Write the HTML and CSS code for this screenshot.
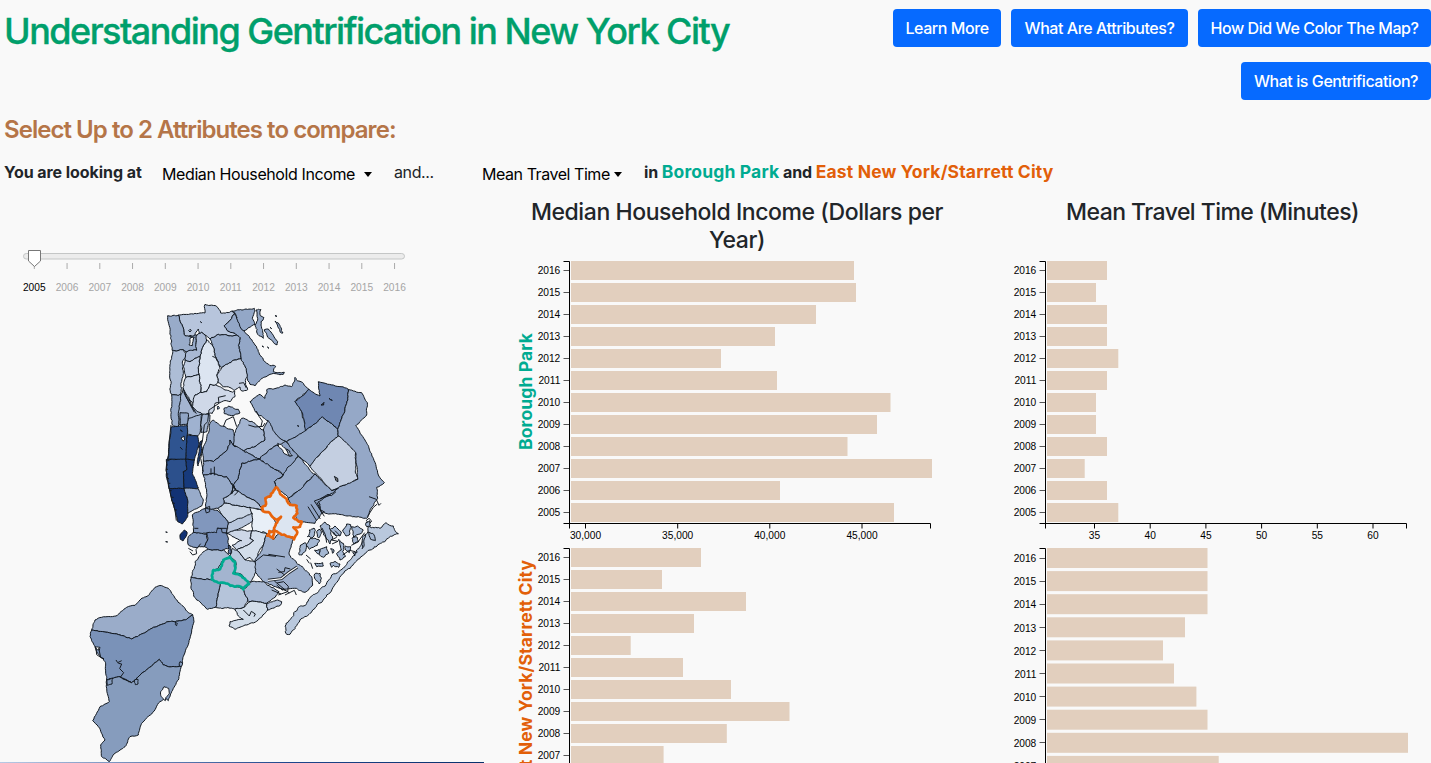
FILE: index.html
```html
<!DOCTYPE html>
<html lang="en">
<head>
<meta charset="utf-8">
<title>Understanding Gentrification in New York City</title>
<link rel="stylesheet" href="styles.css">
</head>
<body>
<header class="top">
  <h1 class="title">Understanding Gentrification in New York City</h1>
  <nav class="actions">
    <button class="btn b1">Learn More</button>
    <button class="btn b2">What Are Attributes?</button>
    <button class="btn b3">How Did We Color The Map?</button>
    <button class="btn b4">What is Gentrification?</button>
  </nav>
</header>
<h2 class="subtitle">Select Up to 2 Attributes to compare:</h2>
<div class="picker">
  <strong class="looking">You are looking at</strong>
  <span class="drop first">Median Household Income<i class="caret"></i></span>
  <span class="and">and...</span>
  <span class="drop second">Mean Travel Time<i class="caret"></i></span>
  <strong class="places">in <span class="teal">Borough Park</span> and <span class="orange">East New York/Starrett City</span></strong>
</div>
<main class="main">
  <section class="mapcol">
    <svg class="slider" id="slider" viewBox="0 198 484 97"></svg>
    <svg class="map" viewBox="0 295 484 467"><g id="map" transform="translate(155 295) scale(.33333)"></g></svg>
    <div class="legend"></div>
  </section>
  <section class="chart income">
    <h3 class="chart-title">Median Household Income (Dollars per<br>Year)</h3>
    <svg id="income" viewBox="510 258 440 505"></svg>
  </section>
  <section class="chart travel">
    <h3 class="chart-title">Mean Travel Time (Minutes)</h3>
    <svg id="travel" viewBox="986 258 445 505"></svg>
  </section>
</main>
<script src="app.js"></script>
</body>
</html>
```
FILE: styles.css
```css
* { box-sizing: border-box; }
html, body { margin: 0; height: 763px; overflow: hidden; }
body { background: #f9f9f9; color: #212529; font-family: Inter, "Liberation Sans", sans-serif; font-size: 16px; }
.top { display: flex; justify-content: space-between; height: 108px; padding: 9px 0 0 4px; }
.title { margin: 0; font-size: 36px; font-weight: 500; line-height: 44px; letter-spacing: -1.51px; color: #009f6b; white-space: nowrap; -webkit-text-stroke: .35px #009f6b; }
.actions { display: flex; flex-wrap: wrap; justify-content: flex-end; align-content: flex-start; gap: 15px 10px; width: 560px; }
.btn { height: 38px; padding: 0; border: 0; border-radius: 4px; background: #066aff; color: #fff; font: 500 16px Inter, sans-serif; letter-spacing: -.43px; white-space: nowrap; }
.b1 { width: 108px; } .b2 { width: 177px; } .b3 { width: 233px; } .b4 { width: 190px; }
.subtitle { margin: 0; padding-left: 4px; height: 44px; line-height: 44px; font-size: 24px; font-weight: 560; letter-spacing: -.95px; color: #b57548; }
.picker { display: flex; height: 46px; padding-left: 4px; line-height: 41px; white-space: nowrap; letter-spacing: -.4px; }
.looking { width: 158px; letter-spacing: -.06px; }
.drop { color: #000; line-height: 45px; }
.first { width: 232px; }
.second { width: 162px; letter-spacing: -.45px; }
.and { width: 88px; }
.caret { display: inline-block; margin-left: 9px; vertical-align: 3px; border: 4.5px solid transparent; border-top: 5px solid #000; border-bottom: 0; }
.second .caret { margin-left: 4px; }
.places { font-size: 16px; line-height: 39px; letter-spacing: -.1px; }
.teal, .orange { font-size: 17.5px; letter-spacing: .16px; }
.teal { color: #00ab91; }
.orange { color: #e25f09; }
.main { display: grid; grid-template-columns: 484px 466px 481px; height: 565px; }
.mapcol { display: flex; flex-direction: column; }
svg { display: block; overflow: hidden; }
.slider { width: 484px; height: 97px; }
.map { width: 484px; height: 467px; }
.legend { height: 1px; background: linear-gradient(90deg, #b8c9e4, #1e468c 60%, #08306b); }
.income { padding-left: 26px; }
.travel { padding-left: 36px; }
.income svg { width: 440px; height: 505px; }
.travel svg { width: 445px; height: 505px; }
.chart-title { margin: 0; height: 60px; font-size: 23px; font-weight: 530; line-height: 28px; letter-spacing: -.42px; text-align: center; }
.income .chart-title { padding-left: 14px; }
.travel .chart-title { padding-left: 8px; letter-spacing: -.55px; }
.tick { font: 10.2px "Liberation Sans", sans-serif; fill: #000; }
.year { font: 10.2px "Liberation Sans", sans-serif; fill: #a5a5a5; text-anchor: middle; }
.year.on { fill: #000; }
.bar { fill: #e2cfbe; }
.axis { fill: none; stroke: #000; }
.area { font: 700 17.5px Inter, sans-serif; text-anchor: middle; }
.land { stroke: #111820; stroke-width: 3; stroke-linejoin: round; }
.water { fill: #f9f9f9; stroke: #111820; stroke-width: 3; }
.detail { fill: none; stroke: #151b22; stroke-width: 3; }
.channel { fill: none; stroke: #151b22; stroke-width: 9; }
.channel.inner { stroke: #f9f9f9; stroke-width: 4; }
.pick { stroke-width: 8; stroke-linejoin: round; }
```
FILE: app.js
```js
const NS = 'http://www.w3.org/2000/svg';
function add(parent, tag, attrs, text) {
  const e = document.createElementNS(NS, tag);
  for (const k in attrs) e.setAttribute(k, attrs[k]);
  if (text) e.textContent = text;
  parent.appendChild(e);
  return e;
}

// Year slider
const slider = document.getElementById('slider');
add(slider, 'rect', { x: 23.5, y: 253.5, width: 381, height: 5.5, rx: 2.8, fill: '#ececec', stroke: '#c4c6c6' });
for (let i = 0; i < 12; i++) {
  const x = 34.3 + i * 32.75;
  add(slider, 'path', { d: `M${x} 263v6`, stroke: '#aaa' });
  add(slider, 'text', { x: x, y: 291, class: i ? 'year' : 'year on' }, String(2005 + i));
}
add(slider, 'path', { d: 'M28.5 250.5h12v10.5l-6 5.5l-6-5.5z', fill: '#fff', stroke: '#777' });

// Horizontal bar charts
function bars(svg, axisX, top, step, height, ends, drop) {
  ends.forEach((end, i) => {
    const y = top + i * step, mid = y + height / 2;
    add(svg, 'rect', { class: 'bar', x: axisX + 1.5, y: y, width: end - axisX - 1.5, height: height });
    add(svg, 'path', { class: 'axis', d: `M${axisX - 6} ${Math.floor(mid) + .5}h6`, 'stroke-opacity': .65 });
    add(svg, 'text', { class: 'tick', x: axisX - 9.2, y: mid + drop, 'text-anchor': 'end' }, String(2016 - i));
  });
}
function xAxis(svg, x0, x1, y, ticks) {
  add(svg, 'path', { class: 'axis', d: `M${x0 - 6} ${y}H${x1}v5M${x0} ${y}v5` });
  ticks.forEach(([x, label]) => {
    add(svg, 'path', { class: 'axis', d: `M${x} ${y}v5` });
    add(svg, 'text', { class: 'tick', x: x, y: 539, 'text-anchor': 'middle' }, label);
  });
}
function yAxis(svg, x, y0, y1) {
  add(svg, 'path', { class: 'axis', d: `M${x - 6} ${y0}h6V${y1}` });
}
const income = document.getElementById('income');
bars(income, 569.5, 261, 22, 19, [854, 856, 816, 775, 721, 777, 890.5, 877, 847.5, 932, 780, 894], 3.5);
bars(income, 569.5, 548, 22, 19, [701, 662, 746, 694, 630.7, 683, 731, 789.5, 726.8, 663.6], 3.5);
yAxis(income, 569.5, 261.5, 528);
yAxis(income, 569.5, 548.5, 770);
xAxis(income, 569.5, 930.5, 523.5, [[585.5, '30,000'], [677.7, '35,000'], [769.8, '40,000'], [862, '45,000']]);
add(income, 'text', { class: 'area', fill: '#00ab91', transform: 'translate(532 391.5) rotate(-90)', textLength: 117 }, 'Borough Park');
add(income, 'text', { class: 'area', fill: '#e25f09', transform: 'translate(532 678.5) rotate(-90)', textLength: 237 }, 'East New York/Starrett City');

const travel = document.getElementById('travel');
bars(travel, 1045.5, 261, 22, 19, [1107, 1096, 1107, 1107, 1118.3, 1107, 1096, 1096, 1107, 1084.7, 1107, 1118.3], 3.5);
bars(travel, 1045.5, 548, 23.1, 20, [1207.5, 1207.5, 1207.5, 1185, 1163, 1174, 1196.4, 1207.5, 1408, 1218.7], 4.2);
yAxis(travel, 1045.5, 261.5, 528);
yAxis(travel, 1045.5, 548.5, 770);
xAxis(travel, 1045.5, 1406.5, 523.5, [35, 40, 45, 50, 55, 60].map((v, i) => [1094.5 + 55.7 * i, String(v)]));

// District map. Shared edges get the same wiggle because it depends only on the two end points.
function edge(a, b, amp, out) {
  const len = Math.hypot(b[0] - a[0], b[1] - a[1]);
  if (len < 7) { out.push(b); return; }
  const flip = a[0] > b[0] || (a[0] === b[0] && a[1] > b[1]);
  const p = flip ? b : a, q = flip ? a : b;
  const s = Math.sin(p[0] * 12.9898 + p[1] * 78.233 + q[0] * 37.719 + q[1] * 4.581) * 43758.5453;
  const off = (s - Math.floor(s) - .5) * amp * Math.min(len, 16);
  const m = [(p[0] + q[0]) / 2 - (q[1] - p[1]) / len * off, (p[1] + q[1]) / 2 + (q[0] - p[0]) / len * off];
  edge(a, m, amp, out);
  edge(m, b, amp, out);
}
function shape(parent, fill, points, dx, dy, amp, cls) {
  const n = points.trim().split(/[ ,]+/).map(Number), pts = [];
  for (let i = 0; i < n.length; i += 2) pts.push([n[i] + dx, n[i + 1] + dy]);
  const out = [pts[0]];
  pts.forEach((p, i) => edge(p, pts[(i + 1) % pts.length], amp, out));
  const attrs = { class: cls || 'land', d: 'M' + out.map(p => p[0].toFixed(1) + ' ' + p[1].toFixed(1)).join('L') + 'Z' };
  if (fill) attrs.fill = fill;
  return add(parent, 'path', attrs);
}
const map = document.getElementById('map');
const draw = (dx, dy, amp, list) => list.forEach(([fill, pts, cls]) => shape(map, fill, pts, dx, dy, amp, cls));
const lines = (dx, dy, list) => list.forEach(d => add(map, 'path', { class: 'detail', d: d, transform: `translate(${dx} ${dy})` }));

// Bronx and upper Manhattan
draw(0, 0, .3, [
  ['#b7c5dc', '70,60 150,54 150,28 165,31 185,34 197,54 232,48 240,56 208,92 215,105 248,122 190,118 165,132 150,120 140,112 132,118 130,102 120,122 90,122 78,85'],
  ['#98abc9', '38,62 70,60 78,85 90,122 105,124 125,120 126,165 110,168 95,170 85,164 52,166 45,110'],
  ['#93a7c7', '232,48 298,40 300,48 292,70 300,88 280,98 262,110 250,90 243,60'],
  ['#95a9c8', '303,45 318,44 316,62 327,68 318,80 320,100 325,130 308,118 300,90 308,70'],
  ['#95a9c8', '328,104 340,102 368,140 366,150 345,132'],
  ['#95a9c8', '360,78 370,84 384,114 376,112'],
  ['#93a7c7', '240,56 208,92 215,105 248,122 255,128 252,160 258,190 270,215 275,245 285,268 300,272 320,250 345,238 385,238 388,232 355,230 362,214 345,212 325,196 310,170 300,150 285,130 270,112 255,95'],
  ['#9aadcb', '165,132 190,118 248,122 255,128 252,160 258,190 240,195 215,208 200,218 190,205 178,165'],
  ['#c4cfe1', '185,240 200,218 215,208 240,195 258,190 270,215 277,240 272,262 278,284 260,288 255,276 240,286 225,278 205,275 188,262'],
  ['#dce5f1', '132,238 135,185 140,165 155,135 165,145 178,165 190,205 195,220 185,240 188,262 182,270 165,268 155,290 137,292'],
  ['#a9b9d4', '126,120 140,112 150,120 155,135 140,165 135,185 120,190 105,200 90,195 95,170 125,166'],
  ['#bfcce1', '90,195 105,200 120,190 135,185 132,238 92,248 85,215'],
  ['#c9d4e5', '92,248 132,238 137,292 120,300 115,330 95,300 84,278'],
  ['#cfd8e8', '120,300 137,292 155,290 165,268 182,270 210,285 240,290 240,305 225,320 205,318 180,325 172,355 150,360 125,355 112,335'],
  ['#adbdd6', '52,166 85,164 92,175 82,205 84,240 80,280 78,298 50,298 46,255 44,230'],
  ['#95a9c8', '50,298 78,298 75,345 70,395 52,390 48,340'],
  ['#a4b5d1', '78,298 84,283 100,310 122,345 142,358 138,380 100,370 97,387 75,390 72,345'],
  [null, '106,128 118,126 112,152 102,150', 'water'],
  ['#93a7c7', '207,340 222,333 250,343 255,354 230,362 208,356'],
  ['#a4b5d1', '142,358 165,360 160,385 156,410 138,412'],
  ['#b7c5dc', '105,103 109,106 105,111 101,107'], ['#223', '136,80 140,83'], ['#223', '321,153 326,156'], ['#223', '337,156 342,160'], ['#223', '345,97 350,101'], ['#223', '360,62 366,64'],
  ['#95a9c8', '189,333 194,339 188,343']
]);
// Midtown and lower Manhattan
draw(0, 345, .14, [
  ['#9fb2d0', '100,25 140,13 135,70 128,78 97,72 97,42'],
  ['#90a5c5', '75,45 75,8 100,10 97,42'],
  ['#2f5490', '50,50 97,47 97,72 92,148 38,148 42,100'],
  ['#1f4283', '97,75 128,78 132,100 125,130 118,150 92,148'],
  ['#2c508c', '34,148 92,148 95,180 85,185 88,235 42,236 34,200'],
  ['#173a7c', '92,148 118,150 112,190 130,234 118,238 88,235 85,185 95,180'],
  ['#123274', '42,236 88,235 98,270 98,320 82,342 68,335 60,300 50,270'],
  ['#98abca', '88,235 130,236 145,270 140,288 98,310 98,270'],
  ['#1f4283', '135,95 141,92 138,130 129,168 127,160'],
  [null, '78,84 87,78 89,90 84,93', 'water'], ['#223', '76,112 82,118'], ['#223', '76,60 82,64']
]);
lines(0, 345, ['M48 45l-5 45l-2 50l-5 10l-3 30l4 20l5 32l8 38l10 30l4 32', 'M37 152h6M33 165h6M33 178h6M34 192h6M36 206h6M40 220h6M44 242h6M50 262h6M54 280h6M60 300h6']);
// Northern Queens and northern Brooklyn
draw(0, 345, .3, [
  ['#8fa3c4', '165,40 175,30 190,42 215,55 235,60 240,90 265,122 240,110 225,90 215,122 175,155 145,152 145,110 155,85'],
  ['#a3b4d0', '237,80 250,45 260,25 300,40 325,60 330,90 300,110 265,122 235,105'],
  ['#a0b1ce', '325,60 340,32 360,50 370,80 395,95 360,108 315,148 265,122 300,110 330,90'],
  ['#8b9fc2', '145,152 175,155 215,122 225,90 240,110 265,122 315,148 260,160 250,205 235,225 215,200 175,190 145,195'],
  ['#8ea2c4', '260,160 315,148 385,195 358,215 362,232 325,295 285,265 240,240 235,225 250,205'],
  ['#96a9c8', '145,195 175,190 215,200 235,225 232,250 205,265 208,280 190,295 165,300 150,295 155,240'],
  ['#b4c3da', '235,225 240,240 285,265 325,295 318,300 285,292 208,280 205,265 232,250'],
  ['#c9d5e5', '190,295 208,280 285,292 292,310 270,325 220,340 205,320'],
  ['#8197bd', '112,315 155,295 190,303 205,320 220,340 215,370 155,370 115,370']
]);
draw(0, 0, .34, [
  ['#93a7c6', '285,320 312,298 330,310 335,285 390,270 410,275 420,247 445,265 462,283 420,320 440,350 452,407 395,440 370,425 340,377 310,360'],
  ['#8da1c3', '315,493 360,453 395,440 430,483 420,500 385,540'],
  ['#98abc9', '385,540 430,483 480,537 440,580 400,610 362,577 358,560']
]);
draw(0, 0, .22, [
  ['#93a7c6', '452,407 502,365 548,403 550,423 520,450 465,515 430,483 395,440'],
  ['#6f87b2', '462,283 495,303 490,260 580,283 575,325 548,403 502,365 452,407 440,350 420,320'],
  ['#95a8c7', '580,283 620,293 637,323 635,360 602,393 630,435 655,490 670,540 688,563 665,577 668,610 652,635 635,670 500,653 490,620 530,587 608,553 602,473 550,423 548,403 575,325'],
  ['#c4cfe1', '550,423 580,450 602,473 602,535 608,553 570,570 530,587 465,515 480,493 520,450'],
  ['#90a4c5', '480,537 530,587 550,580 490,620 500,653 480,685 430,680 400,610 440,580'],
  ['#e8eff7', '285,637 318,645 350,655 365,690 340,720 325,710 292,720 290,655'],
  ['#b8c6dc', '220,685 292,655 292,680 255,700 215,715']
]);
// Flushing Meadows lakes, small ponds and inlets
draw(0, 0, .3, [
  [null, '368,445 378,448 392,460 410,482 404,484 384,470', 'water'],
  ['#b4c3da', '395,462 404,468 412,482 402,480'],
  ['#445', '498,330 507,322 506,330'], ['#445', '522,310 532,316'], ['#445', '427,392 432,394'],
  ['#777', '538,544 548,550 549,560 542,556']
]);
lines(0, 0, ['M459 635l26 42M468 628l28 44M478 618l30 46M478 618l50-18M486 622l10 22l14 8M495 612l24-14l10 4l14-12', 'M642 605l22 8l8 18l6-6M634 676l8-6l8 8l-8 10z', 'M130 460l12-20l6-50l10-10l4-35l30-20l-2-18l22-5M145 455l-8 35l8 40M205 395l8-20l22-10l10 30', 'M172 184l10 4l6 12M252 265l14-2l8 16', 'M280 390l20 6l24-2l6-10M304 348l8 16l10 14l-4 16', 'M228 565l14 18l-14 12l8-20l12 16l-10 10M178 515v26M168 520v20M150 640l14-6v16l-10 4z', 'M84 278l8 26l32 52M86 292l32 60', 'M118 700h12M188 700h28']);

// Southern Brooklyn
draw(0, 675, .28, [
  ['#8399be', '100,50 115,38 155,42 158,60 148,80 120,82 100,75'],
  ['#7189b4', '155,38 185,38 187,24 200,26 202,38 215,40 222,85 205,90 160,88 148,80 158,60'],
  ['#cdd7e7', '215,40 255,30 292,32 285,55 296,62 245,90 232,75 260,62'],
  ['#d3deeb', '292,32 335,40 325,75 310,98 300,125 285,112 270,120 245,90 296,62 285,55'],
  ['#a9bad3', '120,125 145,95 160,88 205,90 225,108 205,120 190,145 175,150 170,180 108,172 118,145'],
  ['#9dafcc', '335,40 355,60 375,37 415,58 403,105 425,130 470,170 473,195 450,217 425,205 375,205 325,185 300,155 300,125 325,75'],
  ['#bac8dd', '225,108 232,85 245,90 270,120 300,125 302,155 290,185 278,185 262,165 240,158 242,125'],
  ['#93a7c6', '108,172 170,180 195,188 182,262 158,268 125,240 108,205'],
  ['#b5c4da', '195,188 265,208 278,242 268,262 240,268 182,262'],
  ['#a9b9d3', '265,208 290,185 325,185 372,215 355,235 335,250 285,245 278,242'],
  ['#d2dde9', '240,268 268,262 285,245 335,250 338,270 310,300 270,315 240,328 222,318 225,305 265,298 250,288'],
  ['#b7c5dc', '335,250 368,240 380,245 376,256 338,270'],
  ['#687fa8', '222,75 228,80 228,100 220,100'],
  ['#123274', '75,45 88,30 96,36 92,52 84,63 76,58'],
  ['#123274', '32,36 37,37'], ['#123274', '32,65 38,66']
]);
['channel', 'channel inner'].forEach(c => add(map, 'path', { class: c, d: 'M427 816l-26 17l-22 18l-40 5' }));
lines(0, 0, ['M105 770l8 10l12-4l-2-12l14-18M100 760l14 8', 'M340 778l50 8M300 800l25-20l38 4', 'M365 822l24 18M370 832l18-2l2-12l16 4M358 858l34 28M365 870l18 16M265 945l18 18l6-14l12 8l-4 8', 'M366 864l20-4l14 14l-2 16l-28 10M375 880l20 8l8 6M350 885l28 12M390 900l28-14l6 14']);

// Rockaway and Jamaica Bay
draw(375, 615, .4, [
  ['#b9c8dd', '20,403 18,370 38,350 55,322 80,310 88,296 130,260 155,225 195,200 230,150 262,100 265,80 300,85 318,68 340,78 355,102 325,115 270,150 200,210 140,285 90,340 60,360 30,403'],
  ['#a4b7d2', '82,110 88,90 102,84 104,100 96,114'], ['#a4b7d2', '110,95 120,88 124,100 116,114'],
  ['#a4b7d2', '78,135 90,116 118,120 112,136 88,148'], ['#a4b7d2', '58,165 62,135 76,128 78,148 66,165'],
  ['#a4b7d2', '120,78 135,66 150,78 158,110 150,132 138,112'], ['#a4b7d2', '150,88 165,78 184,96 180,108 165,106'],
  ['#a4b7d2', '188,90 200,72 212,74 208,105 198,108'], ['#a4b7d2', '214,80 232,78 250,90 240,102 220,112'],
  ['#a4b7d2', '216,115 232,112 236,125 222,132'], ['#a4b7d2', '120,148 140,140 146,160 130,172 118,165'],
  ['#a4b7d2', '176,118 190,130 188,155 196,170 180,180 170,160 184,150'], ['#a4b7d2', '104,190 128,188 130,198 110,200'],
  ['#a4b7d2', '150,190 165,184 180,192 176,202 160,196 155,202'], ['#a4b7d2', '104,222 120,220 124,236 118,252 106,238'],
  ['#a4b7d2', '104,150 118,148 116,162'], ['#a4b7d2', '152,146 162,150 158,160'], ['#a4b7d2', '196,138 212,140 208,158 200,152'],
  ['#a4b7d2', '218,158 232,156 224,168'], ['#a4b7d2', '246,112 256,104 252,130 246,146'], ['#a4b7d2', '262,96 278,100 286,122 272,118'],
  ['#a4b7d2', '258,68 270,62 272,78 260,80']
]);
lines(375, 615, ['M78 165l14 12M80 178l8 12M92 188l6 18M165 92l14 14M170 112l-16 8l20 4l-18 8M254 98l-20 28l-20 10M262 50l18-28l12-10M188 165l20-14l18 4M126 84l10 20l4 24M160 96l10 14']);

// Staten Island
draw(-225, 855, .2, [
  ['#9aacc9', '35,150 45,120 65,112 108,108 140,82 165,76 180,60 208,44 225,22 245,17 265,25 285,55 325,98 338,104 320,118 260,126 220,142 190,160 155,177 120,165'],
  ['#7a92b8', '35,150 120,165 155,177 190,160 220,142 260,126 320,118 338,104 342,125 330,175 312,225 303,258 265,260 250,255 238,238 205,265 180,285 155,308 120,290 80,300 75,245 50,215 45,200 30,170'],
  ['#869cbd', '80,300 120,290 155,308 180,285 205,265 238,238 250,255 265,260 303,258 295,300 275,335 265,362 255,355 240,365 215,402 185,430 175,465 150,470 135,500 105,520 88,545 65,530 62,495 75,480 55,440 38,422 60,380 88,365 80,325'],
  [null, '242,335 252,320 266,325 268,340 258,352 256,362 244,350', 'water'],
  [null, '45,200 60,202 58,210 48,206', 'water'],
  ['#7a92b8', '286,126 292,130 290,137 286,134'],
  ['#869cbd', '300,245 308,248 304,260 298,258'],
  ['#869cbd', '80,300 98,294 96,312 82,316'],
  ['#869cbd', '163,300 174,298 174,312 166,314']
]);
lines(-225, 855, ['M108 240l5 8l12-6M115 250l10 2l-6 14l12 12l-10 14l12 4l22 12M48 204l2 20l18 12M56 204l6 28l10 4']);

// Selected districts
draw(0, 675, .4, [['#a3b4cf', '225,110 240,125 240,150 235,160 260,168 272,180 282,192 265,208 250,198 220,192 185,185 170,178 175,150 195,148 205,120', 'pick teal-line']]);
draw(0, 0, .4, [['#dce5f1', '363,577 380,600 395,612 400,625 425,632 427,655 415,668 440,680 435,695 415,697 427,712 417,733 358,705 355,730 337,722 343,708 355,710 362,690 378,665 362,673 345,655 323,648 320,638 331,632 331,610 345,605', 'pick orange-line']]);
map.querySelector('.teal-line').setAttribute('stroke', '#00ab91');
map.querySelector('.orange-line').setAttribute('stroke', '#e8640c');
```
